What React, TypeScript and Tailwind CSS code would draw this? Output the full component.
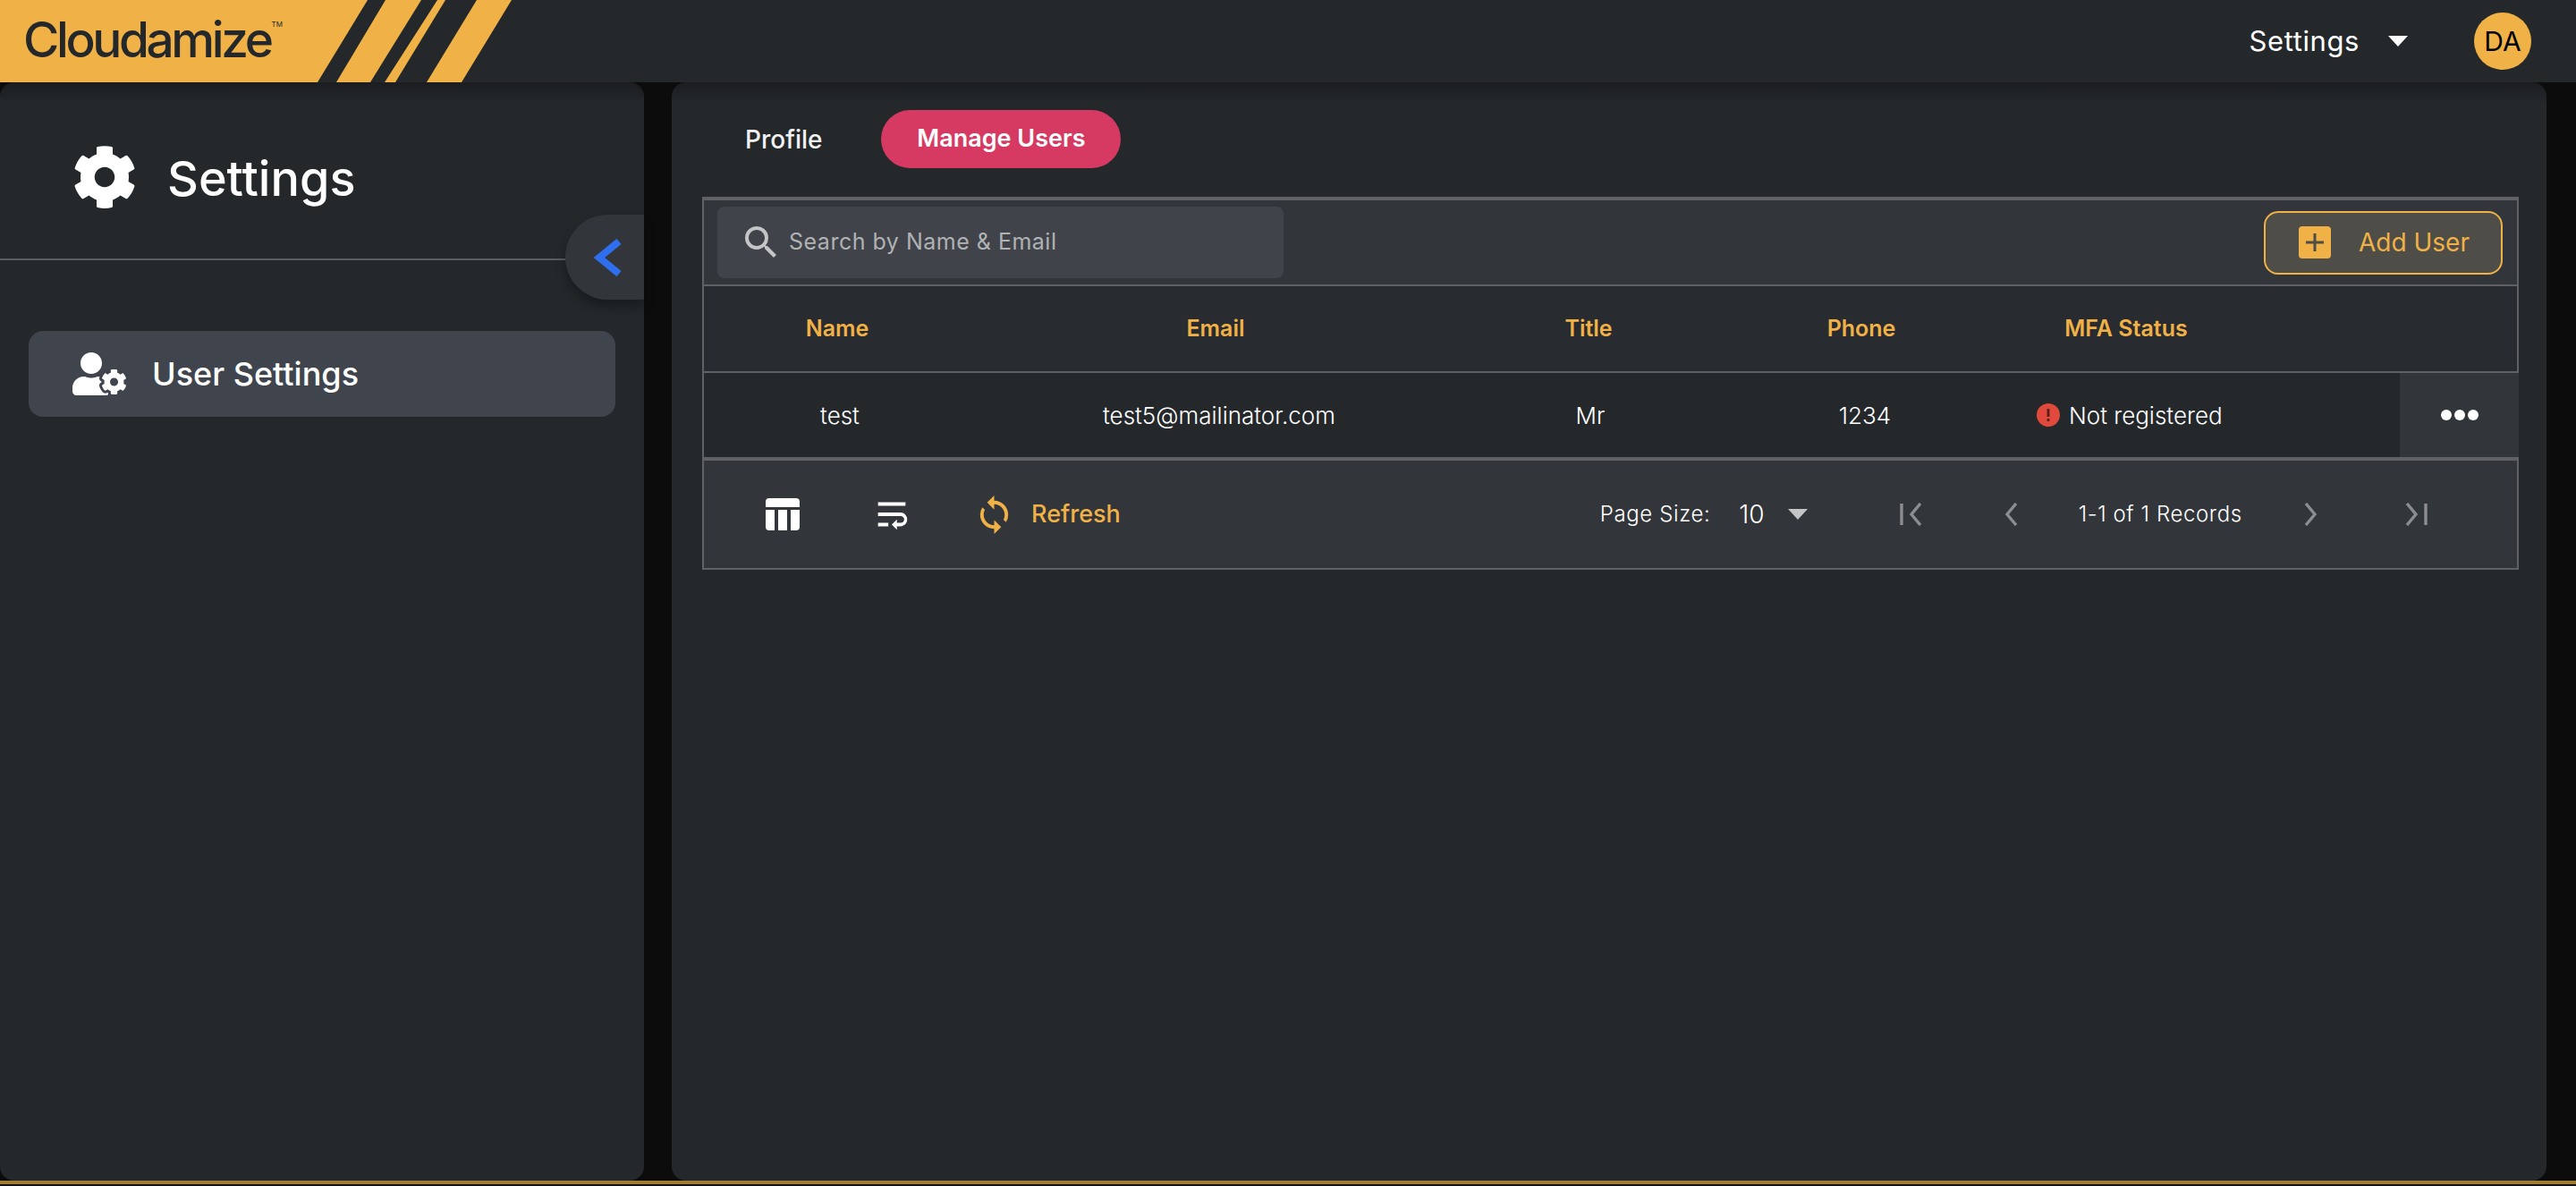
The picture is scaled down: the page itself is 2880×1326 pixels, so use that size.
import { FaCog, FaUserCog } from "react-icons/fa";
import { MdSearch, MdSync, MdWrapText } from "react-icons/md";

const font = "font-['Inter','Liberation_Sans',sans-serif]";

function Logo() {
  return (
    <div className="relative h-[92px] w-[572px]">
      <svg className="absolute inset-0" width="572" height="92" viewBox="0 0 572 92">
        <polygon points="0,0 411,0 355,92 0,92" fill="#f0b247" />
        <polygon points="431,0 471,0 414,92 376,92" fill="#f0b247" />
        <polygon points="489,0 498,0 442,92 430,92" fill="#f0b247" />
        <polygon points="533,0 572,0 516,92 477,92" fill="#f0b247" />
      </svg>
      <div className="relative flex h-full items-center pb-[4px] pl-[26px] text-[#24282b]">
        <span className="text-[55px] leading-none font-medium tracking-[-3.4px]">Cloudamize</span>
        <span className="mb-[34px] ml-[1px] text-[8px] leading-none">TM</span>
      </div>
    </div>
  );
}

function Caret({ className }: { className?: string }) {
  return (
    <svg className={className} width="22" height="12" viewBox="0 0 22 12">
      <polygon points="0,0 22,0 11,12" fill="currentColor" />
    </svg>
  );
}

function TableIcon() {
  return (
    <svg width="38" height="36" viewBox="0 0 38 36" fill="#fff">
      <path d="M4 0h30a4 4 0 0 1 4 4v6H0V4a4 4 0 0 1 4-4z" />
      <path d="M0 13h10v23H4a4 4 0 0 1-4-4z" />
      <rect x="14" y="13" width="10" height="23" />
      <path d="M28 13h10v19a4 4 0 0 1-4 4h-6z" />
    </svg>
  );
}

function PagerIcon({ d }: { d: string }) {
  return (
    <svg width="28" height="26" viewBox="0 0 28 26" fill="none" stroke="#8b8d90" strokeWidth="3.4">
      <path d={d} />
    </svg>
  );
}

function UserTable() {
  const cols = "grid grid-cols-[298px_548px_286px_324px_268px_172px_133px]";
  return (
    <div className="mt-[32px] flex w-[2031px] flex-col border-x-2 border-t-4 border-b-2 border-[#5f6165]">
      {/* Search bar */}
      <div className="flex h-[96px] items-center justify-between border-b-2 border-[#5f6165] bg-[#32353a] pr-[16px] pl-[15px]">
        <div className="flex h-[80px] w-[633px] items-center rounded-[8px] bg-[#404349] pl-[25px]">
          <MdSearch size={48} className="text-[#c4c5c7]" />
          <span className="ml-[7px] text-[25px] tracking-[0.5px] text-[#b0b2b4]">Search by Name &amp; Email</span>
        </div>
        <button className="flex h-[71px] w-[267px] items-center rounded-[16px] border-2 border-[#f0b247] bg-[#4e4d48] pl-[37px]">
          <span className="flex h-[36px] w-[36px] items-center justify-center rounded-[4px] bg-[#f0b247]">
            <svg width="20" height="20" viewBox="0 0 20 20" fill="#4e4d48">
              <rect x="8.5" y="0" width="3" height="20" />
              <rect x="0" y="8.5" width="20" height="3" />
            </svg>
          </span>
          <span className="ml-[31px] text-[28px] text-[#f0b247]">Add User</span>
        </button>
      </div>

      {/* Header */}
      <div className={`${cols} h-[97px] items-center border-b-2 border-[#5f6165] bg-[#282b30] text-center text-[25px] font-semibold text-[#f0b247]`}>
        <div>Name</div>
        <div>Email</div>
        <div>Title</div>
        <div>Phone</div>
        <div>MFA Status</div>
      </div>

      {/* Row */}
      <div className={`${cols} h-[94px] items-center bg-[#24282b] text-center text-[26px] font-light text-white`}>
        <div className="pl-[6px]">test</div>
        <div className="pl-[8px]">test5@mailinator.com</div>
        <div className="pl-[4px]">Mr</div>
        <div className="pl-[8px]">1234</div>
        <div className="flex items-center pl-[34px] whitespace-nowrap">
          <svg width="26" height="26" viewBox="0 0 26 26" className="shrink-0">
            <circle cx="13" cy="13" r="13" fill="#e0493c" />
            <rect x="11.6" y="6" width="2.8" height="9" fill="#5a1f1a" />
            <rect x="11.6" y="17" width="2.8" height="3" fill="#5a1f1a" />
          </svg>
          <span className="ml-[10px]">Not registered</span>
        </div>
        <div />
        <div className="flex h-full items-center justify-center gap-[3px] bg-[#32353a]">
          <span className="h-[12px] w-[12px] rounded-full bg-white" />
          <span className="h-[12px] w-[12px] rounded-full bg-white" />
          <span className="h-[12px] w-[12px] rounded-full bg-white" />
        </div>
      </div>

      {/* Footer */}
      <div className="flex h-[124px] items-center border-t-4 border-[#5f6165] bg-[#32353a] text-white">
        <div className="ml-[69px]">
          <TableIcon />
        </div>
        <MdWrapText size={46} className="ml-[80px]" />
        <MdSync size={47} className="ml-[68px] text-[#f0b247]" />
        <span className="ml-[18px] text-[27px] font-medium text-[#f0b247]">Refresh</span>

        <span className="ml-[536px] text-[24px] font-light tracking-[0.6px]">Page Size:</span>
        <span className="ml-[32px] text-[28px] font-light">10</span>
        <Caret className="ml-[26px] text-[#c4c5c7]" />
        <div className="ml-[103px]">
          <PagerIcon d="M2 1v24M23 1 13 13l10 12" />
        </div>
        <div className="ml-[85px]">
          <PagerIcon d="M17 1 7 13l10 12" />
        </div>
        <span className="ml-[59px] text-[24px] font-light tracking-[0.6px]">1-1 of 1 Records</span>
        <div className="ml-[62px]">
          <PagerIcon d="M9 1l10 12L9 25" />
        </div>
        <div className="ml-[89px]">
          <PagerIcon d="M5 1l10 12L5 25M26 1v24" />
        </div>
      </div>
    </div>
  );
}

export default function App() {
  return (
    <div className={`${font} flex h-[1326px] w-[2880px] flex-col overflow-hidden bg-[#0c0c0c] text-white`}>
      {/* Top bar */}
      <header className="flex h-[92px] shrink-0 items-center justify-between bg-[#24282b] pr-[50px]">
        <Logo />
        <div className="flex items-center">
          <span className="text-[31px] tracking-[0.6px]">Settings</span>
          <Caret className="ml-[32px]" />
          <span className="ml-[74px] flex h-[64px] w-[64px] items-center justify-center rounded-full bg-[#f0b247] text-[30px] text-black">
            DA
          </span>
        </div>
      </header>

      <div className="flex h-[1228px] shrink-0 gap-[31px]">
        {/* Sidebar */}
        <aside className="relative w-[720px] rounded-[16px] bg-[linear-gradient(#1b1d1f,#24282b_24px)]">
          <div className="flex h-[199px] items-start border-b-2 border-[#5b5c5e] pt-[70px] pl-[81px]">
            <FaCog size={72} />
            <span className="ml-[34px] text-[54px] leading-[76px] font-medium">Settings</span>
          </div>
          <div className="absolute top-[148px] right-0 flex h-[95px] w-[88px] items-center rounded-l-full bg-[#32353a] pl-[31px] shadow-[0_8px_12px_rgba(0,0,0,0.3)]">
            <svg width="32" height="42" viewBox="0 0 32 42" fill="none">
              <path d="M29 3 7 21l22 18" stroke="#2f6fed" strokeWidth="8" />
            </svg>
          </div>
          <nav className="mx-[32px] mt-[79px] flex h-[96px] items-center rounded-[16px] bg-[#40454d] pl-[49px]">
            <FaUserCog size={60} />
            <span className="ml-[29px] text-[36px] font-medium">User Settings</span>
          </nav>
        </aside>

        {/* Content */}
        <main className="w-[2096px] rounded-[16px] bg-[linear-gradient(#1b1d1f,#24282b_24px)] px-[34px] pt-[31px]">
          <div className="flex h-[65px] items-center">
            <span className="ml-[48px] text-[28px] font-medium text-[#f2f2f2]">Profile</span>
            <span className="ml-[66px] flex h-[65px] w-[268px] items-center justify-center rounded-full bg-[#d63a63] text-[27px] font-semibold">
              Manage Users
            </span>
          </div>
          <UserTable />
        </main>
      </div>

      <div className="h-[4px] shrink-0 bg-[#a37c33]" />
      <div className="h-[2px] shrink-0 bg-[#111213]" />
    </div>
  );
}
